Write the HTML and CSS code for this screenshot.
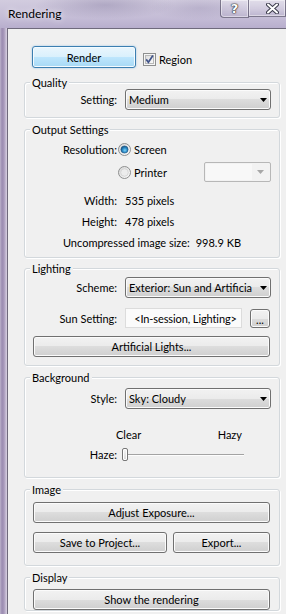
FILE: index.html
```html
<!DOCTYPE html>
<html lang="en">
<head>
    <meta charset="UTF-8">
    <title>Rendering</title>
    <link rel="stylesheet" href="styles.css">
</head>
<body>

<div class="window">
    <div class="titlebar">
        <span class="title">Rendering</span>
        <div class="caption-buttons">
            <span class="cap-btn help">?</span>
            <span class="cap-btn close">
                <svg width="13" height="11" viewBox="0 0 13 11">
                    <path d="M2 1.5 L11 9.5 M11 1.5 L2 9.5" stroke="#3a3a4a" stroke-width="4" stroke-linecap="round"/>
                    <path d="M2 1.5 L11 9.5 M11 1.5 L2 9.5" stroke="#fff" stroke-width="2" stroke-linecap="round"/>
                </svg>
            </span>
        </div>
    </div>

    <div class="frame">
        <div class="frame-edge"></div>
        <div class="client">

            <div class="top-row">
                <button class="btn btn-default">Render</button>
                <label class="check">
                    <svg class="checkbox" width="13" height="13" viewBox="0 0 13 13">
                        <defs>
                            <linearGradient id="cbFill" x1="0" y1="0" x2="1" y2="1">
                                <stop offset="0" stop-color="#dcdcdc"/>
                                <stop offset="1" stop-color="#fbfbfb"/>
                            </linearGradient>
                        </defs>
                        <rect x="0.5" y="0.5" width="12" height="12" fill="#f6f6f6" stroke="#8e8f8f"/>
                        <rect x="2.5" y="2.5" width="8" height="8" fill="url(#cbFill)" stroke="#b9b9b9"/>
                        <path d="M3.2 6.4 L5.4 9.2 L9.9 2.6" fill="none" stroke="#41548a" stroke-width="1.7"/>
                    </svg>
                    Region
                </label>
            </div>

            <div class="group group-quality">
                <div class="group-title">Quality</div>
                <div class="row row-combo">
                    <span class="lbl">Setting:</span>
                    <div class="combo">
                        <span class="combo-text">Medium</span>
                        <svg width="7" height="4" viewBox="0 0 7 4"><path d="M0 0 H7 L3.5 4 Z" fill="#000"/></svg>
                    </div>
                </div>
            </div>

            <div class="group group-output">
                <div class="group-title">Output Settings</div>
                <div class="row row-res">
                    <span class="lbl">Resolution:</span>
                    <svg class="radio" width="13" height="13" viewBox="0 0 13 13">
                        <defs>
                            <linearGradient id="rgFill1" x1="0" y1="0" x2="1" y2="1">
                                <stop offset="0" stop-color="#d6d6d6"/>
                                <stop offset="1" stop-color="#fdfdfd"/>
                            </linearGradient>
                            <radialGradient id="rgDot" cx="0.55" cy="0.6" r="0.6">
                                <stop offset="0" stop-color="#7fd3f7"/>
                                <stop offset="0.55" stop-color="#2a8ac6"/>
                                <stop offset="1" stop-color="#15507f"/>
                            </radialGradient>
                        </defs>
                        <circle cx="6.5" cy="6.5" r="6" fill="url(#rgFill1)" stroke="#8e8f8f"/>
                        <circle cx="6.5" cy="6.5" r="3.6" fill="url(#rgDot)" stroke="#1c5380" stroke-width="0.6"/>
                    </svg>
                    <span class="radio-text">Screen</span>
                </div>
                <div class="row row-printer">
                    <span class="lbl"></span>
                    <svg class="radio" width="13" height="13" viewBox="0 0 13 13">
                        <defs>
                            <linearGradient id="rgFill2" x1="0" y1="0" x2="1" y2="1">
                                <stop offset="0" stop-color="#d6d6d6"/>
                                <stop offset="1" stop-color="#fdfdfd"/>
                            </linearGradient>
                        </defs>
                        <circle cx="6.5" cy="6.5" r="6" fill="url(#rgFill2)" stroke="#8e8f8f"/>
                        <circle cx="6.5" cy="6.5" r="3.8" fill="#ececec" stroke="#c8c8c8" stroke-width="0.6"/>
                    </svg>
                    <span class="radio-text">Printer</span>
                    <div class="combo-disabled">
                        <span class="combo-field"></span>
                        <span class="combo-arrow">
                            <svg width="7" height="4" viewBox="0 0 7 4"><path d="M0 0 H7 L3.5 4 Z" fill="#a7a7a7"/></svg>
                        </span>
                    </div>
                </div>
                <div class="row row-width">
                    <span class="lbl">Width:</span>
                    <span class="value">535 pixels</span>
                </div>
                <div class="row row-height">
                    <span class="lbl">Height:</span>
                    <span class="value">478 pixels</span>
                </div>
                <div class="row row-size">
                    <span>Uncompressed image size:</span>
                    <span>998.9 KB</span>
                </div>
            </div>

            <div class="group group-lighting">
                <div class="group-title">Lighting</div>
                <div class="row row-combo row-scheme">
                    <span class="lbl">Scheme:</span>
                    <div class="combo">
                        <span class="combo-text">Exterior: Sun and Artificia</span>
                        <svg width="7" height="4" viewBox="0 0 7 4"><path d="M0 0 H7 L3.5 4 Z" fill="#000"/></svg>
                    </div>
                </div>
                <div class="row row-sun">
                    <span class="lbl">Sun Setting:</span>
                    <div class="textbox">&lt;In-session, Lighting&gt;</div>
                    <button class="btn btn-dots">...</button>
                </div>
                <button class="btn btn-wide btn-lights">Artificial Lights...</button>
            </div>

            <div class="group group-background">
                <div class="group-title">Background</div>
                <div class="row row-combo row-style">
                    <span class="lbl">Style:</span>
                    <div class="combo">
                        <span class="combo-text">Sky: Cloudy</span>
                        <svg width="7" height="4" viewBox="0 0 7 4"><path d="M0 0 H7 L3.5 4 Z" fill="#000"/></svg>
                    </div>
                </div>
                <div class="ticks">
                    <span>Clear</span>
                    <span>Hazy</span>
                </div>
                <div class="row row-haze">
                    <span class="lbl">Haze:</span>
                    <div class="slider">
                        <div class="slider-track"></div>
                        <div class="slider-thumb"></div>
                    </div>
                </div>
            </div>

            <div class="group group-image">
                <div class="group-title">Image</div>
                <button class="btn btn-wide btn-exposure">Adjust Exposure...</button>
                <div class="btn-row">
                    <button class="btn btn-save">Save to Project...</button>
                    <button class="btn btn-export">Export...</button>
                </div>
            </div>

            <div class="group group-display">
                <div class="group-title">Display</div>
                <button class="btn btn-wide btn-show">Show the rendering</button>
            </div>

        </div>
    </div>
</div>

</body>
</html>
```

FILE: styles.css
```css
body {
    margin: 0;
    padding: 0;
    width: 286px;
    height: 614px;
    overflow: hidden;
    font-family: Lato, "Liberation Sans", sans-serif;
    font-size: 11px;
    color: #000;
}
.window {
    display: flex;
    flex-direction: column;
    height: 614px;
}
.titlebar {
    height: 28px;
    flex: none;
    display: flex;
    align-items: flex-start;
    background:
        radial-gradient(ellipse 70px 14px at 105px 5px, rgba(120, 110, 150, 0.35), transparent),
        radial-gradient(ellipse 50px 12px at 200px 8px, rgba(130, 120, 160, 0.25), transparent),
        linear-gradient(#d2ccdf, #c4bcd6 65%, #b8aecd);
}
.title {
    margin: 6px 0 0 8px;
    font-size: 12px;
    line-height: 15px;
    text-shadow: 0 0 6px rgba(255, 255, 255, 0.9);
}
.caption-buttons {
    margin-left: auto;
    display: flex;
}
.cap-btn {
    height: 17px;
    display: flex;
    align-items: center;
    justify-content: center;
    border: 1px solid rgba(50, 44, 70, 0.55);
    border-top: none;
    background: linear-gradient(rgba(255, 255, 255, 0.35), rgba(255, 255, 255, 0.12) 55%, rgba(90, 80, 120, 0.08));
    box-shadow: inset 0 0 0 1px rgba(255, 255, 255, 0.45);
}
.help {
    width: 27px;
    border-bottom-left-radius: 4px;
    color: #fff;
    font: bold 13px "DejaVu Sans", sans-serif;
    text-shadow: 0 0 1px #222, 0 0 1px #222, 0 0 2px #333;
}
.close {
    width: 37px;
    border-left: none;
    padding-left: 10px;
    box-sizing: border-box;
}
.frame {
    flex: 1;
    display: flex;
}
.frame-edge {
    width: 7px;
    flex: none;
    background: linear-gradient(to right, #bdb3cc 0, #9a8cb1 2px, #a899bb 4px, #cac1d7 6px, #d6cfe0 7px);
}
.client {
    flex: 1;
    background-color: #f0f0f0;
    border-top: 1px solid #6f6a7c;
    border-left: 1px solid #6f6a7c;
}

.top-row {
    display: flex;
    align-items: flex-start;
    margin-top: 17px;
    padding-left: 24px;
}
.btn {
    box-sizing: border-box;
    height: 21px;
    padding: 0;
    display: flex;
    align-items: center;
    justify-content: center;
    font-family: inherit;
    font-size: 11px;
    color: #000;
    border: 1px solid #707070;
    border-radius: 3px;
    background: linear-gradient(#f2f2f2, #ebebeb 50%, #dddddd 50%, #cfcfcf);
    box-shadow: inset 0 0 0 1px #fbfbfb;
}
.btn-default {
    width: 104px;
    height: 22px;
    border-color: #3c7fb1;
    background: linear-gradient(#eaf6fd, #d9f0fc 50%, #bee6fd 50%, #a7d9f5);
    box-shadow: inset 0 0 0 1px #f4fbff, 0 0 2px rgba(60, 150, 220, 0.5);
}
.check {
    box-sizing: border-box;
    display: flex;
    align-items: center;
    height: 22px;
    padding-top: 4px;
    margin-left: 7px;
}
.checkbox {
    margin-right: 3px;
}

.group {
    margin: 11px 6px 0 16px;
    padding: 0 8px 0 0;
    border: 1px solid #d3d8dc;
    border-radius: 3px;
    box-shadow: inset 1px 1px 0 #fff, 1px 1px 0 #fff;
}
.group-title {
    width: fit-content;
    margin: -8px 0 -7px 5px;
    padding: 0 2px;
    line-height: 15px;
    background-color: #f0f0f0;
}
.row {
    display: flex;
    align-items: center;
    height: 20px;
}
.lbl {
    width: 92px;
    flex: none;
    text-align: right;
}
.row-combo {
    height: 21px;
}
.combo {
    box-sizing: border-box;
    width: 146px;
    height: 21px;
    margin-left: 8px;
    padding: 0 3px;
    display: flex;
    align-items: center;
    border: 1px solid #707070;
    border-radius: 3px;
    background: linear-gradient(#f2f2f2, #ebebeb 50%, #dddddd 50%, #cfcfcf);
    box-shadow: inset 0 0 0 1px #fbfbfb;
}
.combo-text {
    flex: 1;
    overflow: hidden;
    white-space: nowrap;
}

.group-quality {
    margin-top: 14px;
    padding-bottom: 7px;
}
.group-quality .row {
    margin-top: 6px;
}

.group-output {
    padding-bottom: 5px;
}
.radio {
    margin-left: 1px;
    flex: none;
}
.radio-text {
    margin-left: 3px;
}
.row-res {
    margin-top: 9px;
}
.row-printer {
    margin-top: 3px;
}
.combo-disabled {
    box-sizing: border-box;
    width: 67px;
    height: 20px;
    margin-left: auto;
    padding: 1px;
    display: flex;
    border: 1px solid #b7b7b7;
    border-radius: 2px;
    background-color: #f2f2f2;
}
.combo-field {
    flex: 1;
    background-color: #f8f8f8;
}
.combo-arrow {
    width: 17px;
    display: flex;
    align-items: center;
    justify-content: center;
}
.row-width {
    margin-top: 8px;
}
.row-height,
.row-size {
    margin-top: 1px;
}
.value {
    margin-left: 8px;
}
.row-size {
    justify-content: center;
    gap: 6px;
    margin-right: -8px;
}

.group-lighting {
    margin-top: 10px;
    padding-bottom: 8px;
}
.row-scheme {
    margin-top: 8px;
}
.row-sun {
    margin-top: 10px;
}
.textbox {
    box-sizing: border-box;
    width: 117px;
    height: 20px;
    margin-left: 8px;
    padding-left: 4px;
    display: flex;
    align-items: center;
    justify-content: center;
    white-space: nowrap;
    letter-spacing: -0.1px;
    border: 1px solid #dcdcdc;
    background-color: #fbfbfb;
}
.btn-dots {
    width: 20px;
    height: 19px;
    margin-left: 8px;
    align-items: flex-end;
    padding-bottom: 2px;
    line-height: 10px;
}
.btn-wide {
    width: 237px;
    margin-left: 8px;
}
.btn-lights {
    margin-top: 8px;
}

.group-background {
    padding-bottom: 14px;
}
.row-style {
    margin-top: 10px;
}
.ticks {
    display: flex;
    justify-content: space-between;
    width: 126px;
    height: 15px;
    line-height: 15px;
    margin: 18px 0 0 91px;
}
.row-haze {
    height: 18px;
    margin-top: 3px;
}
.slider {
    position: relative;
    width: 122px;
    height: 13px;
    margin-left: 5px;
}
.slider-track {
    height: 1px;
    margin: 6px 0 0 6px;
    background-color: #a3a3a3;
    border-bottom: 1px solid #fdfdfd;
}
.slider-thumb {
    position: absolute;
    left: 0;
    top: 0;
    box-sizing: border-box;
    width: 6px;
    height: 13px;
    border: 1px solid #777;
    border-radius: 2px;
    background: linear-gradient(#f6f6f6, #dadada);
    box-shadow: inset 0 0 0 1px #fff;
}

.group-image {
    padding-bottom: 12px;
}
.btn-exposure {
    margin-top: 12px;
}
.btn-row {
    display: flex;
    gap: 6px;
    margin: 9px 0 0 8px;
}
.btn-save {
    width: 134px;
}
.btn-export {
    width: 97px;
}

.btn-show {
    margin-top: 11px;
}
```
